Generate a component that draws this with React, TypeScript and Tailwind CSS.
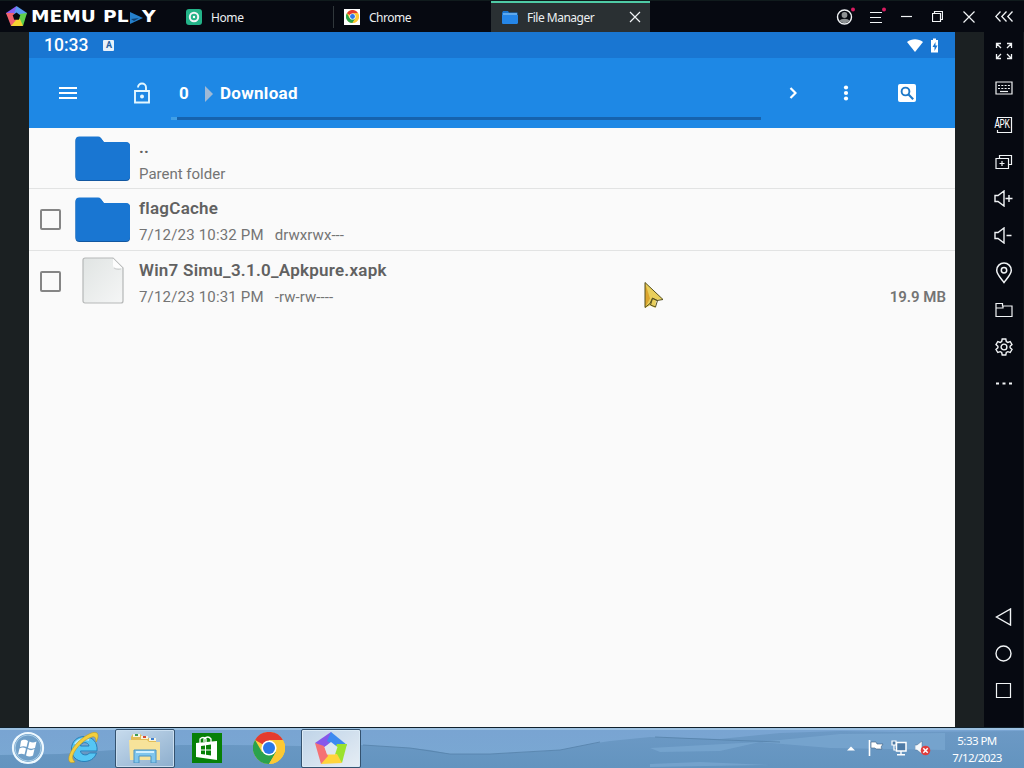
import type { ReactNode } from "react";

type IconProps = { w: number; h: number; className?: string; children: ReactNode };

function Icon({ w, h, className = "", children }: IconProps) {
  return (
    <svg
      width={w}
      height={h}
      viewBox={`0 0 ${w} ${h}`}
      fill="none"
      stroke="#f1f4f6"
      strokeWidth="1.2"
      className={`block shrink-0 ${className}`}
    >
      {children}
    </svg>
  );
}

function MemuMark({ size }: { size: number }) {
  return (
    <svg width={size} height={size} viewBox="0 0 32 32" className="block shrink-0">
      <path d="M16 0 0 11 8 16 20 9Z" fill="#8758ea" />
      <path d="M16 0 32 13 25 17 12 9Z" fill="#3d8af0" />
      <path d="M32 12 27 31 17 22 22 12Z" fill="#9be22d" />
      <path d="M27 31 6 32 9 22 22 22Z" fill="#ffd43c" />
      <path d="M6 32 0 11 9 14 13 24Z" fill="#f57174" />
      <path d="m16 10 6.500 5-2.500 7.500h-8L9.500 15Z" fill="#dde7f0" />
    </svg>
  );
}

function ChromeMark({ size }: { size: number }) {
  return (
    <svg width={size} height={size} viewBox="0 0 32 32" className="block shrink-0">
      <circle cx="16" cy="16" r="16" fill="#ffcd40" />
      <path d="M16 16 2.1 8A16 16 0 0 1 29.9 8L16 8Z" fill="#e33b2e" />
      <path d="M2.1 8A16 16 0 0 0 16 32L23 20 16 16 9 20Z" fill="#2ba24c" />
      <path d="M29.9 8A16 16 0 0 1 16 32L23 20 20 8Z" fill="#fcc934" />
      <circle cx="16" cy="16" r="7.6" fill="#fff" />
      <circle cx="16" cy="16" r="6" fill="#2c78e8" />
    </svg>
  );
}

function TitleBar() {
  return (
    <header className="flex h-8 bg-[#060911] border-t border-[#101b1d] font-['Noto_Sans',sans-serif] text-[12px] text-[#eceff1]">
      <div className="flex w-[176px] items-center pl-[6px]">
        <svg width="21" height="21" viewBox="0 0 21 21" className="block shrink-0">
          <path d="M10.5 0 0 7 3 12 11 8Z" fill="#8b5cf0" />
          <path d="M10.5 0 21 7 18 12 8 8Z" fill="#5b9bf2" />
          <path d="M21 7 17 20 11 15 14 8Z" fill="#5fd04a" />
          <path d="M17 20 5 20 5 13 14 13Z" fill="#f5d332" />
          <path d="M5 20 0 7 8 7 10 14Z" fill="#f0626e" />
          <path d="m10.5 6.500 3.800 2.800-1.500 4.400H8.200L6.700 9.300Z" fill="#060911" />
        </svg>
        <div className="mt-[2px] ml-[4px] flex items-center font-['DejaVu_Sans',sans-serif] text-[15.5px] leading-none font-bold text-white">
          <span className="w-[72px] whitespace-nowrap">
            <span className="inline-block origin-left scale-x-[1.2]">MEMU</span>
          </span>
          <span className="w-[27px]">
            <span className="inline-block origin-left scale-x-[1.2]">PL</span>
          </span>
          <svg width="13" height="12" viewBox="0 0 13 12" className="block">
            <path d="M0 0 13 6 0 12Z" fill="#2580cc" />
            <path d="m1 7 8-1-5 3Z" fill="#12406f" />
          </svg>
          <span className="-ml-px inline-block origin-left scale-x-[1.22]">Y</span>
        </div>
      </div>

      <div className="flex w-[158px] items-center pl-[10px]">
        <span className="flex size-4 items-center justify-center rounded-[3px] bg-[#23b388]">
          <Icon w={12} h={12}>
            <circle cx="6" cy="6" r="4.2" strokeWidth="2" />
            <circle cx="6" cy="6" r="1.2" fill="#fff" stroke="none" />
          </Icon>
        </span>
        <span className="mt-[2px] ml-[9px] tracking-[-0.4px]">Home</span>
        <span className="ml-auto h-[22px] w-px bg-[#30373b]" />
      </div>

      <div className="flex w-[157px] items-center pl-[10px]">
        <span className="flex size-4 items-center justify-center bg-white">
          <ChromeMark size={13} />
        </span>
        <span className="mt-[2px] ml-[9px] tracking-[-0.5px]">Chrome</span>
      </div>

      <div className="flex w-[159px] items-center border-t-2 border-[#4fcba6] bg-[#2a3033] pr-[9px] pb-px pl-[11px]">
        <Icon w={16} h={13}>
          <path d="M0 2 1 0h5l1 1.500h8.500V12l-1 1H1l-1-1Z" fill="#1976d2" stroke="none" />
          <path d="M1 3h14" stroke="#8ecbff" />
          <path d="M0 4h16v8l-1 1H1l-1-1Z" fill="#2586e8" stroke="none" />
        </Icon>
        <span className="mt-px ml-[9px] whitespace-nowrap tracking-[-0.5px]">File Manager</span>
        <Icon w={12} h={12} className="ml-auto">
          <path d="m1 1 10 10M11 1 1 11" />
        </Icon>
      </div>

      <div className="ml-auto flex">
        <div className="flex w-[31px] items-center justify-center">
          <Icon w={21} h={19}>
            <circle cx="10.5" cy="10" r="7" strokeWidth="1.4" />
            <circle cx="10.5" cy="8" r="2.9" fill="#8d9193" stroke="none" />
            <path d="M5.5 14c1-3 9-3 10 0-2.500 2.700-7.500 2.700-10 0Z" fill="#8d9193" stroke="none" />
            <circle cx="19" cy="2.500" r="2" fill="#d81b60" stroke="none" />
          </Icon>
        </div>
        <div className="flex w-[31px] items-center justify-center">
          <Icon w={21} h={19}>
            <path d="M5 5.500h12M5 10.500h11M5 15.500h12" />
            <circle cx="19" cy="2.500" r="2" fill="#d81b60" stroke="none" />
          </Icon>
        </div>
        <div className="flex w-[31px] items-center justify-center">
          <Icon w={11} h={11}>
            <path d="M0 5.500h11" />
          </Icon>
        </div>
        <div className="flex w-[31px] items-center justify-center">
          <Icon w={11} h={11}>
            <path d="M2.500 2.500v-2h8v8h-2M.500 2.500h8v8h-8Z" />
          </Icon>
        </div>
        <div className="flex w-[31px] items-center justify-center">
          <Icon w={12} h={12}>
            <path d="m.500.500 11 11m0-11-11 11" />
          </Icon>
        </div>
        <div className="flex w-10 items-center justify-center">
          <Icon w={18} h={11}>
            <path d="M5.500.500.800 5.500l4.700 5m6-10-4.700 5 4.700 5m6-10-4.700 5 4.700 5" strokeWidth="1.300" />
          </Icon>
        </div>
      </div>
    </header>
  );
}

const SIDE_TOP: ReactNode[] = [
  <Icon w={18} h={18} key="full">
    <path d="M1.500 6V1.500H6m-4.500 0L6 6M12 1.500h4.500V6m0-4.500L12 6M1.500 12v4.500H6m-4.500 0L6 12m10.500 0v4.500H12m4.500 0L12 12" strokeWidth="1.300" />
  </Icon>,
  <Icon w={18} h={14} key="keys">
    <path d="M1 1h16v12H1Z" />
    <path d="M3 4.500h12M3 7.500h12" strokeDasharray="2 1.300" />
    <path d="M5 10.500h8" />
  </Icon>,
  <div className="relative size-[18px]" key="apk">
    <Icon w={18} h={18}>
      <path d="M2.500 4V1.500h14v15h-14V14" />
    </Icon>
    <span className="absolute top-[5px] left-0 h-[8px] w-[15px] bg-[#060911]" />
    <span className="absolute top-[5px] left-0 block origin-center scale-y-[1.35] font-['Liberation_Mono',monospace] text-[9px] leading-[8px] tracking-[-0.4px]">
      APK
    </span>
  </div>,
  <Icon w={18} h={16} key="multi">
    <path d="M4.500 4V1.500h12v9H14M1 4.500h12.500v10H1ZM4.500 9.500h5M7 7v5" />
  </Icon>,
  <Icon w={19} h={17} key="volup">
    <path d="M1 5.500h3l6-4.500v15l-6-4.500H1ZM11.500 8.500H18.500M15 5v7" strokeWidth="1.400" />
  </Icon>,
  <Icon w={19} h={17} key="voldown">
    <path d="M1 5.500h3l6-4.500v15l-6-4.500H1ZM12.500 8.500h5" strokeWidth="1.400" />
  </Icon>,
  <Icon w={18} h={22} key="pin">
    <path d="M9 20.500C6.500 17 1.700 12.500 1.700 8.300a7.300 7.300 0 0 1 14.600 0C16.300 12.500 11.500 17 9 20.500Z" strokeWidth="1.500" />
    <circle cx="9" cy="8.300" r="2.700" strokeWidth="1.500" />
  </Icon>,
  <Icon w={18} h={16} key="dir">
    <path d="M1 14.500V1.500h6.500v2.500H17v10.500ZM1 6h7V4" />
  </Icon>,
  <Icon w={18} h={18} key="gear">
    <path
      d="M7.200 1h3.600l.5 2.500 1.500.9 2.400-.9L17 6.600l-1.900 1.700v1.500l1.900 1.700-1.800 3-2.400-.8-1.500.8-.5 2.500H7.200l-.5-2.500-1.500-.8-2.400.8-1.800-3 1.900-1.700V8.300L1 6.600l1.800-3.100 2.400.9 1.500-.9Z"
      strokeWidth="1.400"
    />
    <circle cx="9" cy="9" r="2.900" strokeWidth="1.400" />
  </Icon>,
  <Icon w={18} h={4} key="more">
    <path d="M1 1.500h3m3.500 0h3m3.500 0h3" strokeWidth="2" />
  </Icon>,
];

const SIDE_BOTTOM: ReactNode[] = [
  <Icon w={17} h={18} key="back">
    <path d="M15.500 1v16L1.500 9Z" strokeWidth="1.400" />
  </Icon>,
  <Icon w={17} h={17} key="home">
    <circle cx="8.500" cy="8.500" r="7.500" strokeWidth="1.400" />
  </Icon>,
  <Icon w={17} h={17} key="recent">
    <path d="M1.500 1.500h14v14h-14Z" />
  </Icon>,
];

function SideBar() {
  return (
    <aside className="flex w-10 flex-col justify-between border-r border-[#12171c] bg-[#060911] pb-[18px] text-white">
      {[SIDE_TOP, SIDE_BOTTOM].map((group, g) => (
        <div key={g}>
          {group.map((icon, i) => (
            <div key={i} className="flex h-[37px] items-center justify-center">
              {icon}
            </div>
          ))}
        </div>
      ))}
    </aside>
  );
}

function FolderIcon() {
  return (
    <Icon w={56} h={46}>
      <path d="M.500 41V5a4 4 0 0 1 4-4H23a4 4 0 0 1 3 1.400L29 6.500h22a4 4 0 0 1 4 4V41a4 4 0 0 1-4 4H4.500a4 4 0 0 1-4-4Z" fill="#1257a0" stroke="none" />
      <path d="M.500 40V4.500a4 4 0 0 1 4-4H23a4 4 0 0 1 3 1.400L29 6h22a4 4 0 0 1 4 4v30a4 4 0 0 1-4 4H4.500a4 4 0 0 1-4-4Z" fill="#1976d2" stroke="none" />
    </Icon>
  );
}

function FileIcon() {
  return (
    <Icon w={42} h={47}>
      <defs>
        <linearGradient id="paper" x1="0" x2="1" y1="0" y2="1">
          <stop stopColor="#e0e4e3" />
          <stop offset="1" stopColor="#f5f6f6" />
        </linearGradient>
      </defs>
      <path d="M3 1h28l10 10v33a2 2 0 0 1-2 2H3a2 2 0 0 1-2-2V3a2 2 0 0 1 2-2Z" fill="url(#paper)" stroke="#b5b7b7" />
      <path d="M31 1.500 40.500 11H34a3 3 0 0 1-3-3Z" fill="#fdfdfd" stroke="none" />
      <path d="M32 11c2 1.500 5 1.500 7 1" stroke="#cfd1d1" />
    </Icon>
  );
}

type Row = { name: string; detail: string; mode?: string; size?: string; kind: "parent" | "folder" | "file" };

const ROWS: Row[] = [
  { name: "..", detail: "Parent folder", kind: "parent" },
  { name: "flagCache", detail: "7/12/23 10:32 PM", mode: "drwxrwx---", kind: "folder" },
  { name: "Win7 Simu_3.1.0_Apkpure.xapk", detail: "7/12/23 10:31 PM", mode: "-rw-rw----", size: "19.9 MB", kind: "file" },
];

function FileRow({ row }: { row: Row }) {
  return (
    <div className="flex h-[61.5px] border-b border-[#e2e3e3] last:border-0">
      <div className="flex w-[45px] items-center pt-px pl-[11px]">
        {row.kind !== "parent" && <span className="size-[21px] rounded-[2px] border-2 border-[#858585]" />}
      </div>
      <div className="flex w-[57px] justify-center pt-[8px]">
        {row.kind === "file" ? (
          <span className="-mt-[2px]">
            <FileIcon />
          </span>
        ) : (
          <FolderIcon />
        )}
      </div>
      <div className="flex flex-1 flex-col pt-[7px] pl-[8px]">
        <span className="text-[17px] leading-[24px] font-semibold tracking-[0.25px] text-[#616161]">{row.name}</span>
        <div className="mt-[5px] flex pr-[9px] text-[15px] leading-[20px] text-[#747474]">
          <span className={row.kind === "parent" ? "" : "tracking-[0.18px]"}>{row.detail}</span>
          {row.mode && <span className="ml-[11px] tracking-[0.05px]">{row.mode}</span>}
          {row.size && <span className="ml-auto font-semibold">{row.size}</span>}
        </div>
      </div>
    </div>
  );
}

function FileManager() {
  return (
    <main className="relative flex w-[926px] flex-col bg-[#fafafa] font-[Roboto,sans-serif]">
      <div className="flex h-[26px] items-center bg-[#1976d2] pt-px pr-[14px] pl-[15px] text-white">
        <span className="mt-px text-[17.5px] leading-none font-medium">10:33</span>
        <span className="ml-[15px] flex h-[11px] w-[11px] items-center justify-center rounded-[1px] bg-[#e8f1fb] text-[9px] leading-none font-bold text-[#27619f]">
          A
        </span>
        <Icon w={16} h={13} className="ml-auto">
          <path d="M0 3C4.500-.700 11.500-.700 16 3L8 13Z" fill="#fff" stroke="none" />
        </Icon>
        <Icon w={10} h={15} className="mr-px ml-[7px]">
          <path d="M1 2h2V.500h3V2h2v12.500H1Z" fill="#fff" stroke="none" />
          <path d="M5.500 4 2.500 9h2v4l3-5.500h-2Z" fill="#1976d2" stroke="none" />
        </Icon>
      </div>

      <div className="flex h-[69.5px] shrink-0 bg-[#1e88e5] text-white">
        <div className="flex w-[78px] items-center justify-center">
          <Icon w={18} h={14}>
            <path d="M0 2h18M0 7h18M0 12h18" stroke="#fff" strokeWidth="2.200" />
          </Icon>
        </div>
        <div className="flex w-[70px] items-center justify-center">
          <Icon w={18} h={22}>
            <path d="M2 9h14v11.500H2ZM5 5.500a4 4 0 0 1 8 0V9" stroke="#e3f7ff" strokeWidth="1.900" />
            <circle cx="9" cy="14.500" r="2" fill="#e3f7ff" stroke="none" />
          </Icon>
        </div>
        <div className="flex w-[584px] flex-col justify-between">
          <div className="flex h-[59px] items-center pt-[12px] pl-[2px] text-[17px] font-bold tracking-[0.3px]">
            <span className="w-[26px]">0</span>
            <Icon w={8} h={16} className="mr-[7px]">
              <path d="M0 0 8 8 0 16Z" fill="#9fb9d6" stroke="none" />
            </Icon>
            <span>Download</span>
          </div>
          <div className="mb-[7.5px] -ml-[6px] flex h-[3px] bg-[#1663ae]">
            <span className="w-[6px] bg-[#409fe6]" />
          </div>
        </div>
        <div className="flex w-16 items-center justify-center">
          <Icon w={8} h={12}>
            <path d="m1.500 1 5 5-5 5" stroke="#fff" strokeWidth="2.200" />
          </Icon>
        </div>
        <div className="flex w-[42px] items-center justify-center">
          <Icon w={6} h={18}>
            <g fill="#fff" stroke="none">
              <circle cx="3" cy="3.500" r="2.100" />
              <circle cx="3" cy="9" r="2.100" />
              <circle cx="3" cy="14.500" r="2.100" />
            </g>
          </Icon>
        </div>
        <div className="flex w-20 items-center justify-center">
          <Icon w={18} h={18}>
            <rect width="18" height="18" rx="2" fill="#fff" stroke="none" />
            <circle cx="7.500" cy="7.500" r="3.900" stroke="#1e78c8" strokeWidth="1.900" />
            <path d="m10.500 10.500 4.700 4.700" stroke="#1e78c8" strokeWidth="2.100" />
          </Icon>
        </div>
      </div>

      <div>
        {ROWS.map((row) => (
          <FileRow key={row.name} row={row} />
        ))}
      </div>

      <Icon w={20} h={28} className="absolute top-[249px] left-[615px]">
        <path d="M1 1.500 19 18.500 12 19 11.500 27 6 24.500 1 27Z" fill="#e9cf5c" stroke="none" />
        <path d="M1 1.500 6 17.500 1 27Z" fill="#dca62f" stroke="none" />
        <path d="M1 1.500 19 18.500 13 19.500 8.500 17 6 22.500 1 26.500ZM8.500 17.500l5 2-2 6.500-5-2Z" stroke="#55501f" strokeWidth="1" />
      </Icon>
    </main>
  );
}

function Wallpaper() {
  return (
    <svg viewBox="0 0 1024 40" preserveAspectRatio="none" className="absolute inset-0 size-full">
      <defs>
        <linearGradient id="sky" x1="0" x2="0" y1="0" y2="1">
          <stop stopColor="#79a4d2" />
          <stop offset="1" stopColor="#7aa9d3" />
        </linearGradient>
        <linearGradient id="sea" x1="0" x2="0" y1="0" y2="1">
          <stop stopColor="#6c99c5" />
          <stop offset="1" stopColor="#6394bf" />
        </linearGradient>
      </defs>
      <path d="M0 0h1024v40H0Z" fill="url(#sky)" />
      <path
        d="M0 27 60 26 180 17 230 17 300 18 363 17 410 20 430 22 450 26 490 26 530 24 560 22 590 16 610 13 650 9 720 11 780 5 840 3 900 4 1024 3V40H0Z"
        fill="url(#sea)"
      />
      <path d="M650 20 760 14 720 23 660 24ZM760 14 840 6 945 5 945 22 830 20ZM650 36 700 34 770 37 650 39Z" fill="#7aa8d2" opacity=".7" />
      <path d="m655 9 70 3 55 2M363 17l47 3 40 6 40 0 70-4 40-8" stroke="#5681a9" strokeWidth=".8" fill="none" />
      <path d="M0 1h1024" stroke="#a9cbe7" strokeWidth="1.500" />
    </svg>
  );
}

function ExplorerIcon() {
  return (
    <svg width="34" height="30" viewBox="0 0 34 30" className="block">
      <path d="M3 4 5 1h7l2 2h4l1 2h9v21H3Z" fill="#e3bd58" />
      <path d="M5 1h7v3H5ZM13 3h7v3h-7ZM21 5h7v3h-7Z" fill="#f6f4df" />
      <path d="M7 1h3v2H7Z" fill="#3f9c55" />
      <path d="M15 3h3v2h-3Z" fill="#d64b36" />
      <path d="M23 5h3v2h-3Z" fill="#3f7fd0" />
      <path d="M1 7h18l2 2h11v18H2Z" fill="#f7e39a" />
      <path d="M6 17h22v13h-5v-7H11v7H6Z" fill="#80c6ed" stroke="#4b93c2" />
      <path d="M8 19h18" stroke="#d1f0ff" strokeWidth="2" />
    </svg>
  );
}

function TaskBar() {
  return (
    <footer className="relative h-[41px] border-t border-[#10202b]">
      <Wallpaper />
      <div className="relative flex h-full items-center">
        <div className="flex w-14 justify-center">
          <svg width="34" height="34" viewBox="0 0 34 34" className="block">
            <circle cx="17" cy="17" r="15" fill="#6f9fc8" stroke="#eef9ff" strokeWidth="2.200" />
            <circle cx="17" cy="17" r="13" fill="none" stroke="#a9cee8" />
            <path d="m10 10 c3-2 5-1 7 0l-1.500 6c-2-1-4-1-6.500 0ZM18.500 10.500c2 1 4 1.500 7 0L24 17c-2.500 1-5 1-7 0ZM8.500 17.500c2.500-1.500 4.500-1 6.500 0l-1.500 6c-2-1-4-1-6.500 0ZM16.500 18c2.500 1.500 4.500 1.500 7 0L22 24.500c-2.500 1.500-5 1-7 0Z" fill="#fff" />
          </svg>
        </div>
        <div className="flex w-[59px] justify-center pr-[4px]">
          <svg width="34" height="34" viewBox="0 0 34 34" className="block">
            <path d="M30 20H13.500c.500 4.500 7 5 9 2h7c-2 6-7 8.500-12.500 8.500-7.500 0-12.500-5-12.500-12.500S10 5.500 17.500 5.500 31 11 30 20ZM13.500 15h8.500c-.500-4.500-8-4.500-8.500 0Z" fill="#55c6f4" stroke="#287fb8" fillRule="evenodd" />
            <path d="M8 13c3-5 9-6 14-4" fill="none" stroke="#b4e9fb" strokeWidth="2" />
            <path d="M8 31C0 34 0 26 6 17 13 7 26-1 30 2c2 2 1 6-1 9 0-4-1-6-4-5C18 8 9 16 6 24c-1 3 0 5 2 7Z" fill="#f3cf3f" stroke="#b89525" strokeWidth=".6" />
          </svg>
        </div>
        <div className="flex h-[39px] w-[60px] items-center justify-center rounded-[2px] border border-[#34526f] bg-linear-to-br from-[#c7dbed] to-[#8daecd] shadow-[inset_0_0_0_1px_#c9def0]">
          <ExplorerIcon />
        </div>
        <div className="flex w-16 justify-center">
          <svg width="30" height="30" viewBox="0 0 30 30" className="block">
            <path d="M0 0h30v30H0Z" fill="#078008" />
            <path d="M4 10 25 8v19L4 24Z" fill="#fff" />
            <path d="M8 10V6q3-3 6 0v4M12 9V6q4-4 7 0v3" stroke="#fff" strokeWidth="1.300" fill="none" />
            <path d="m9 13 4-.500v4H9ZM14 12.300l5-.700v5h-5ZM9 17.500h4v4L9 21ZM14 17.500h5v5l-5-.700Z" fill="#078008" />
          </svg>
        </div>
        <div className="flex w-[62px] justify-center pr-[2px]">
          <ChromeMark size={32} />
        </div>
        <div className="flex h-[39px] w-[60px] items-center justify-center rounded-[2px] border border-[#34526f] bg-linear-to-br from-[#bfd4e8] to-[#e6edf4] shadow-[inset_0_0_0_1px_#dcebf6]">
          <MemuMark size={32} />
        </div>

        <div className="ml-auto flex items-center">
          <Icon w={8} h={5} className="mr-[13px]">
            <path d="m0 4.500 4-4 4 4Z" fill="#fff" stroke="none" />
          </Icon>
          <Icon w={16} h={16} className="mr-[7px]">
            <path d="M1.500 0v16" stroke="#fff" strokeWidth="1.600" />
            <path d="M3 2h5l1 2h6l-2 3 1 2H8L7 8H3Z" fill="#fff" stroke="#3d5d7c" strokeWidth=".6" />
          </Icon>
          <Icon w={16} h={16} className="mr-[8px]">
            <path d="M5.500 2.500h9.500v8.500H5.500Z" fill="#4f7ba6" stroke="#fff" strokeWidth="1.500" />
            <path d="M10 11v3M6 14.800h8" stroke="#fff" strokeWidth="1.400" />
            <path d="M1 1h4v4H1ZM3 5v5h2" fill="#4f7ba6" stroke="#fff" />
          </Icon>
          <Icon w={16} h={16}>
            <path d="M0 5h2l5-4v13l-5-4H0Z" fill="#f5f9fc" stroke="#4d6f92" strokeWidth=".5" />
            <circle cx="10.500" cy="10.500" r="4.800" fill="#df3d3d" stroke="none" />
            <path d="m8.300 8.300 4.400 4.400m0-4.400-4.400 4.400" stroke="#fff" strokeWidth="1.500" />
          </Icon>
          <div className="mt-[2px] mr-[18px] ml-[17px] w-[58px] text-center font-['Noto_Sans',sans-serif] text-[11.5px] leading-[17px] tracking-[-0.55px] text-white">
            <p>5:33 PM</p>
            <p className="whitespace-nowrap">7/12/2023</p>
          </div>
        </div>
      </div>
    </footer>
  );
}

export default function App() {
  return (
    <div className="flex h-[768px] w-[1024px] flex-col overflow-hidden">
      <TitleBar />
      <div className="flex min-h-0 flex-1 bg-[#1b2022] pl-[29px]">
        <FileManager />
        <div className="flex-1" />
        <SideBar />
      </div>
      <TaskBar />
    </div>
  );
}
